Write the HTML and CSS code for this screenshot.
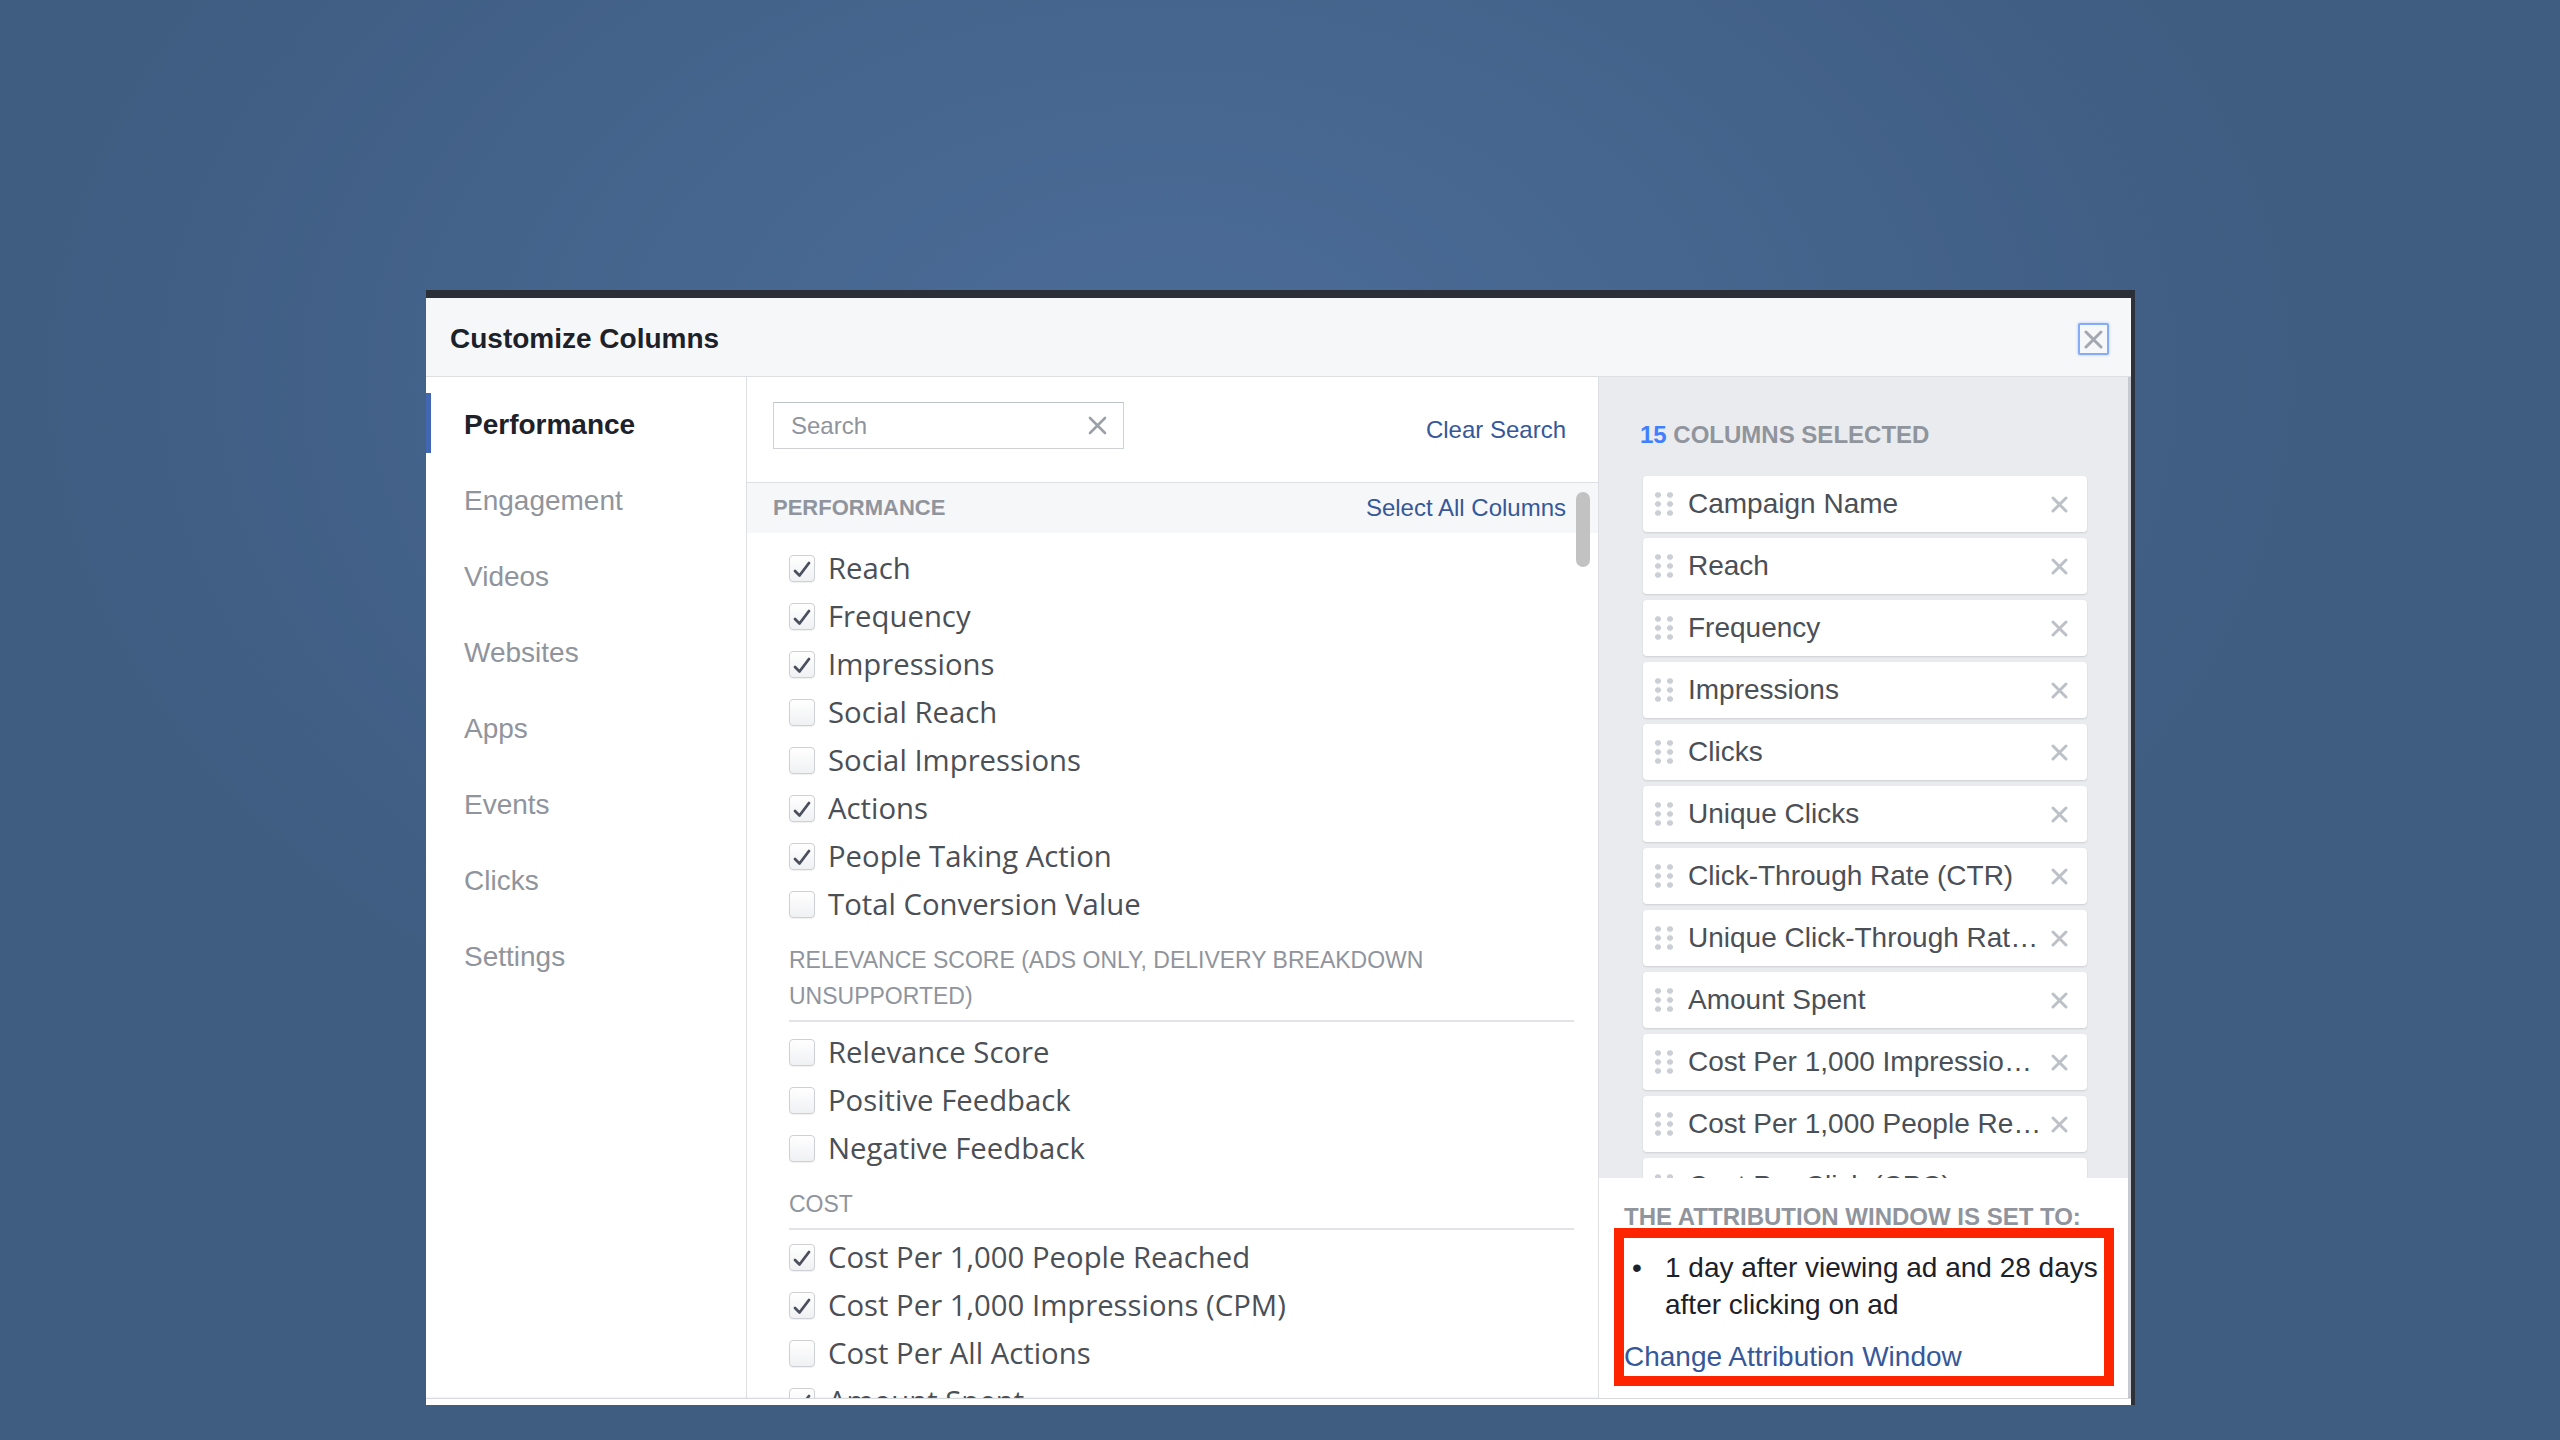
FILE: index.html
```html
<!DOCTYPE html>
<html lang="en">
<head>
<meta charset="utf-8">
<title>Customize Columns</title>
<link rel="stylesheet" href="styles.css">
</head>
<body>
<div class="dialog">
  <div class="dlg-header">
    <h1 class="dlg-title">Customize Columns</h1>
    <button class="dlg-close" aria-label="Close">
      <svg width="19" height="19" viewBox="0 0 19 19"><path d="M2 2 L17 17 M17 2 L2 17" stroke="#a3a8b0" stroke-width="3" stroke-linecap="round" fill="none"/></svg>
    </button>
  </div>
  <div class="dlg-body">
    <nav class="side-nav">
      <a class="nav-item active">Performance</a>
      <a class="nav-item">Engagement</a>
      <a class="nav-item">Videos</a>
      <a class="nav-item">Websites</a>
      <a class="nav-item">Apps</a>
      <a class="nav-item">Events</a>
      <a class="nav-item">Clicks</a>
      <a class="nav-item">Settings</a>
    </nav>

    <section class="picker">
      <div class="search-row">
        <div class="search-box">
          <span class="search-ph">Search</span>
          <svg class="search-clear" width="19" height="19" viewBox="0 0 19 19"><path d="M2 2 L17 17 M17 2 L2 17" stroke="#9aa0a8" stroke-width="2.6" stroke-linecap="round" fill="none"/></svg>
        </div>
        <a class="link clear-link">Clear Search</a>
      </div>
      <div class="scroll-area">
        <div class="group-band">
          <span class="band-title">PERFORMANCE</span>
          <a class="link">Select All Columns</a>
        </div>
        <div class="group-body">
          <ul class="check-list first">
            <li class="check-item"><span class="cb on"></span>Reach</li>
            <li class="check-item"><span class="cb on"></span>Frequency</li>
            <li class="check-item"><span class="cb on"></span>Impressions</li>
            <li class="check-item"><span class="cb"></span>Social Reach</li>
            <li class="check-item"><span class="cb"></span>Social Impressions</li>
            <li class="check-item"><span class="cb on"></span>Actions</li>
            <li class="check-item"><span class="cb on"></span>People Taking Action</li>
            <li class="check-item"><span class="cb"></span>Total Conversion Value</li>
          </ul>
          <div class="subhead">RELEVANCE SCORE (ADS ONLY, DELIVERY BREAKDOWN UNSUPPORTED)</div>
          <ul class="check-list">
            <li class="check-item"><span class="cb"></span>Relevance Score</li>
            <li class="check-item"><span class="cb"></span>Positive Feedback</li>
            <li class="check-item"><span class="cb"></span>Negative Feedback</li>
          </ul>
          <div class="subhead cost">COST</div>
          <ul class="check-list tight">
            <li class="check-item"><span class="cb on"></span>Cost Per 1,000 People Reached</li>
            <li class="check-item"><span class="cb on"></span>Cost Per 1,000 Impressions (CPM)</li>
            <li class="check-item"><span class="cb"></span>Cost Per All Actions</li>
            <li class="check-item"><span class="cb on"></span>Amount Spent</li>
          </ul>
        </div>
        <div class="scroll-thumb"></div>
      </div>
    </section>

    <aside class="selected">
      <div class="sel-top">
        <h2 class="sel-title"><span class="count">15</span> COLUMNS SELECTED</h2>
        <ul class="card-list">
          <li class="card"><span class="grip"></span><span class="card-text">Campaign Name</span><span class="card-x"></span></li>
          <li class="card"><span class="grip"></span><span class="card-text">Reach</span><span class="card-x"></span></li>
          <li class="card"><span class="grip"></span><span class="card-text">Frequency</span><span class="card-x"></span></li>
          <li class="card"><span class="grip"></span><span class="card-text">Impressions</span><span class="card-x"></span></li>
          <li class="card"><span class="grip"></span><span class="card-text">Clicks</span><span class="card-x"></span></li>
          <li class="card"><span class="grip"></span><span class="card-text">Unique Clicks</span><span class="card-x"></span></li>
          <li class="card"><span class="grip"></span><span class="card-text">Click-Through Rate (CTR)</span><span class="card-x"></span></li>
          <li class="card"><span class="grip"></span><span class="card-text">Unique Click-Through Rate (Unique CTR)</span><span class="card-x"></span></li>
          <li class="card"><span class="grip"></span><span class="card-text">Amount Spent</span><span class="card-x"></span></li>
          <li class="card"><span class="grip"></span><span class="card-text">Cost Per 1,000 Impressions (CPM)</span><span class="card-x"></span></li>
          <li class="card"><span class="grip"></span><span class="card-text">Cost Per 1,000 People Reached</span><span class="card-x"></span></li>
          <li class="card"><span class="grip"></span><span class="card-text">Cost Per Click (CPC)</span><span class="card-x"></span></li>
        </ul>
      </div>
      <div class="attrib">
        <h3 class="attrib-title">THE ATTRIBUTION WINDOW IS SET TO:</h3>
        <ul class="attrib-list">
          <li class="attrib-item"><span class="attrib-text">1 day after viewing ad and 28 days after clicking on ad</span></li>
        </ul>
        <a class="link attrib-link">Change Attribution Window</a>
        <div class="highlight"></div>
      </div>
    </aside>
  </div>
  <div class="dlg-footer"></div>
</div>
</body>
</html>
```

FILE: styles.css
```css
* { box-sizing: border-box; }

html, body {
  margin: 0;
  padding: 0;
}

body {
  width: 2560px;
  height: 1440px;
  overflow: hidden;
  font-family: "Liberation Sans", Arial, sans-serif;
  background-color: #3f5c81;
  background-image: radial-gradient(ellipse 1150px 780px at 1170px 380px, #4b6c98 0%, #46668f 45%, #3f5c81 100%);
}

ul { list-style: none; margin: 0; padding: 0; }
h1, h2, h3 { margin: 0; }
a { cursor: pointer; }

.dialog {
  margin-left: 426px;
  margin-top: 290px;
  width: 1709px;
  background: #fff;
  border-top: 8px solid #2b3038;
  border-right: 4px solid #2d323a;
  display: flex;
  flex-direction: column;
}

/* header */
.dlg-header {
  height: 79px;
  background: #f6f7f9;
  border-bottom: 1px solid #dddfe2;
  display: flex;
  align-items: center;
  justify-content: space-between;
  padding: 4px 22px 0 24px;
}
.dlg-title {
  font-size: 28px;
  font-weight: bold;
  color: #1d2129;
}
.dlg-close {
  width: 31px;
  height: 32px;
  padding: 0;
  border: 2px solid #86acf7;
  border-radius: 2px;
  box-shadow: 0 0 3px #a8c3fa;
  background: #f6f7f9;
  display: flex;
  align-items: center;
  justify-content: center;
}

/* body */
.dlg-body {
  height: 1021px;
  display: flex;
}

.side-nav {
  width: 321px;
  flex: none;
  border-right: 1px solid #dddfe2;
  padding-top: 9px;
  display: flex;
  flex-direction: column;
}
.nav-item {
  height: 76px;
  line-height: 78px;
  padding-left: 38px;
  font-size: 28px;
  color: #90949c;
}
.nav-item.active {
  font-weight: bold;
  color: #1d2129;
  background: linear-gradient(#4267b2, #4267b2) no-repeat 0 7px / 5px 60px;
}

/* middle column */
.picker {
  width: 851px;
  flex: none;
  display: flex;
  flex-direction: column;
}
.search-row {
  height: 106px;
  flex: none;
  border-bottom: 1px solid #dddfe2;
  display: flex;
  align-items: flex-start;
  justify-content: space-between;
  padding: 25px 32px 0 26px;
}
.search-box {
  width: 351px;
  height: 47px;
  border: 1px solid #cfd2d7;
  border-top-color: #bfc3ca;
  background: #fff;
  display: flex;
  align-items: center;
  justify-content: space-between;
  padding: 0 16px 0 17px;
}
.search-ph {
  font-size: 24px;
  color: #90949c;
}
.link {
  color: #365899;
  font-size: 24px;
}
.clear-link {
  margin-top: 14px;
}

.scroll-area {
  flex: 1;
  position: relative;
  overflow: hidden;
}
.group-band {
  height: 50px;
  background: #f6f7f9;
  display: flex;
  align-items: center;
  justify-content: space-between;
  padding: 0 32px 0 26px;
}
.band-title {
  font-size: 22px;
  font-weight: bold;
  color: #90949c;
}
.group-body {
  padding: 0 24px 0 42px;
}
.check-list.first { margin-top: 11px; }
.check-list { margin-top: 6px; }
.check-list.tight { margin-top: 3px; }
.check-item {
  height: 48px;
  display: flex;
  align-items: center;
  font-family: "Open Sans", "Liberation Sans", sans-serif;
  font-size: 29.3px;
  color: #4b4f56;
  white-space: nowrap;
}
.cb {
  width: 26px;
  height: 27px;
  flex: none;
  margin-right: 13px;
  border: 1px solid #cdd0d5;
  border-radius: 4px;
  background: linear-gradient(#ffffff, #f0f1f3);
  box-shadow: 0 1px 1px rgba(0,0,0,0.06);
}
.cb.on {
  background-image:
    url("data:image/svg+xml;utf8,<svg xmlns='http://www.w3.org/2000/svg' width='24' height='25' viewBox='0 0 24 25'><path d='M5 15 L9.5 19.5 L19 7' stroke='%234b4f5e' stroke-width='2.8' fill='none' stroke-linecap='round' stroke-linejoin='round'/></svg>"),
    linear-gradient(#ffffff, #f0f1f3);
  background-repeat: no-repeat;
  background-position: center;
}
.subhead {
  margin-top: 14px;
  font-size: 23px;
  line-height: 36px;
  color: #90949c;
  padding-bottom: 6px;
  border-bottom: 2px solid #e1e3e7;
}
.subhead.cost { margin-top: 14px; }

.scroll-thumb {
  position: absolute;
  top: 9px;
  right: 8px;
  width: 14px;
  height: 75px;
  border-radius: 7px;
  background: #c2c2c2;
}

/* right column */
.selected {
  width: 533px;
  flex: none;
  border-left: 1px solid #dddfe2;
  border-right: 3px solid #c6c9cf;
  display: flex;
  flex-direction: column;
}
.sel-top {
  height: 801px;
  flex: none;
  overflow: hidden;
  background: #e9ebee;
  padding: 43px 41px 0 41px;
}
.sel-title {
  font-size: 24px;
  line-height: 30px;
  font-weight: bold;
  color: #90949c;
  margin-bottom: 26px;
}
.count { color: #4080ff; }
.card-list {
  margin-left: 3px;
}
.card {
  height: 56px;
  margin-bottom: 6px;
  background: #fff;
  border-radius: 4px;
  box-shadow: 0 1px 2px rgba(0,0,0,0.12);
  display: flex;
  align-items: center;
  padding: 0 19px 0 12px;
}
.grip {
  width: 18px;
  height: 24px;
  flex: none;
  background-image: radial-gradient(circle, #cbcfd5 2.8px, transparent 3.2px);
  background-size: 12px 9px;
  background-position: -3px -1.5px;
}
.card-text {
  flex: 1;
  min-width: 0;
  margin: 0 6px 0 15px;
  font-size: 28px;
  color: #4b4f56;
  white-space: nowrap;
  overflow: hidden;
  text-overflow: ellipsis;
}
.card-x {
  width: 17px;
  height: 17px;
  flex: none;
  background-image: url("data:image/svg+xml;utf8,<svg xmlns='http://www.w3.org/2000/svg' width='17' height='17' viewBox='0 0 17 17'><path d='M2 2 L15 15 M15 2 L2 15' stroke='%23bcc0c7' stroke-width='3' fill='none' stroke-linecap='round'/></svg>");
}

.attrib {
  flex: 1;
  position: relative;
  background: #fff;
  padding: 24px 4px 0 25px;
}
.attrib-title {
  font-size: 24px;
  line-height: 30px;
  font-weight: bold;
  color: #90949c;
  white-space: nowrap;
}
.attrib-list {
  margin-top: 17px;
}
.attrib-item {
  display: flex;
  font-size: 28px;
  line-height: 37px;
  color: #1d2129;
}
.attrib-item::before {
  content: "\2022";
  flex: none;
  width: 33px;
  padding-left: 8px;
}
.attrib-link {
  display: block;
  margin-top: 15px;
  font-size: 28px;
  line-height: 37px;
}
.highlight {
  position: absolute;
  left: 15px;
  top: 50px;
  width: 500px;
  height: 158px;
  border: 10px solid #ff2400;
  pointer-events: none;
}

.dlg-footer {
  height: 7px;
  background: #fff;
  border-top: 1px solid #d6d9dd;
  box-shadow: 0 -1px 2px rgba(0,0,0,0.05);
}
```
